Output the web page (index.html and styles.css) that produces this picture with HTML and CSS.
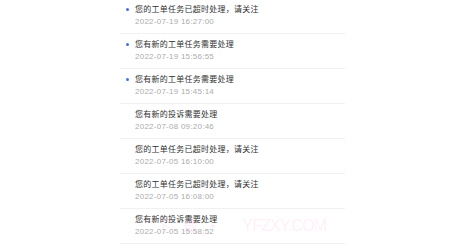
FILE: index.html
```html
<!DOCTYPE html>
<html lang="zh-CN">
<head>
<meta charset="utf-8">
<link rel="stylesheet" href="styles.css">
</head>
<body>
<ul class="list">
  <li class="item unread"><div class="title">您的工单任务已超时处理，请关注</div><div class="time">2022-07-19 16:27:00</div></li>
  <li class="item unread"><div class="title">您有新的工单任务需要处理</div><div class="time">2022-07-19 15:56:55</div></li>
  <li class="item unread"><div class="title">您有新的工单任务需要处理</div><div class="time">2022-07-19 15:45:14</div></li>
  <li class="item"><div class="title">您有新的投诉需要处理</div><div class="time">2022-07-08 09:20:46</div></li>
  <li class="item"><div class="title">您的工单任务已超时处理，请关注</div><div class="time">2022-07-05 16:10:00</div></li>
  <li class="item"><div class="title">您的工单任务已超时处理，请关注</div><div class="time">2022-07-05 16:08:00</div></li>
  <li class="item"><div class="title">您有新的投诉需要处理</div><div class="time">2022-07-05 15:58:52</div></li>
</ul>
<div class="watermark"><span>下</span><span>载</span><span>•</span><span class="wm-site">YFZXY.COM</span></div>
</body>
</html>
```
FILE: styles.css
```css
html, body {
  margin: 0;
  padding: 0;
  background: #ffffff;
  overflow: hidden;
}
body {
  width: 450px;
  height: 248px;
  position: relative;
  font-family: "Noto Sans CJK SC", "Liberation Sans", sans-serif;
}
.list {
  list-style: none;
  margin: -2px 0 0 120px;
  padding: 0;
  width: 225px;
}
.item {
  position: relative;
  padding: 4px 0 5px 15px;
  border-bottom: 1px solid #f1f1f1;
}
.item:first-child {
  padding-top: 5px;
}
.unread::before {
  content: "";
  position: absolute;
  left: 6px;
  top: 9px;
  width: 3px;
  height: 3px;
  border-radius: 50%;
  background: #3f72d9;
}
.item:first-child.unread::before {
  top: 10px;
}
.title {
  font-size: 8px;
  line-height: 12px;
  letter-spacing: 0.25px;
  color: #303030;
}
.time {
  margin-top: 1px;
  font-family: "Liberation Sans", sans-serif;
  font-size: 8px;
  line-height: 12px;
  letter-spacing: 0.25px;
  color: #acacac;
}
.watermark {
  position: absolute;
  left: 156px;
  top: 215px;
  display: flex;
  align-items: center;
  gap: 12px;
  font-family: "Liberation Sans", "Noto Sans CJK SC", sans-serif;
  font-size: 15px;
  color: rgba(255, 120, 210, 0.13);
  white-space: nowrap;
  pointer-events: none;
}
.wm-site {
  margin-left: 15px;
  font-size: 16px;
  letter-spacing: -0.8px;
}
```
